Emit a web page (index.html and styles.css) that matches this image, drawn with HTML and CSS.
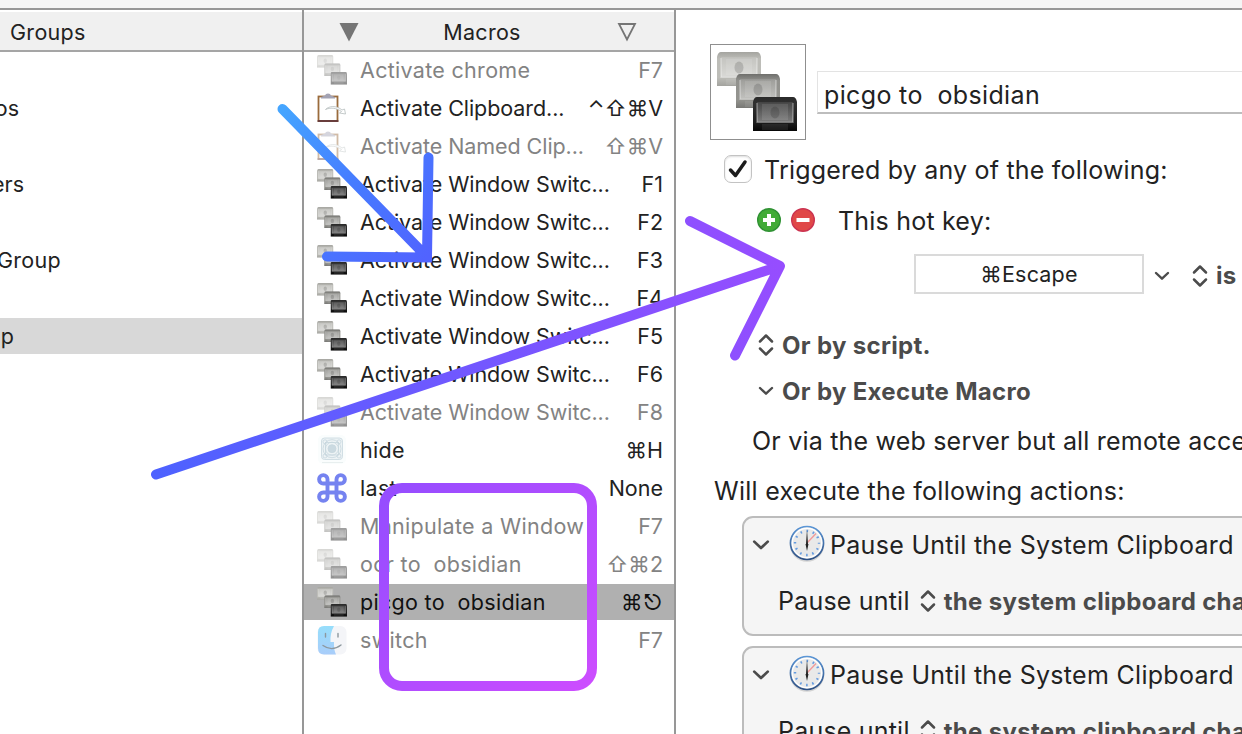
FILE: index.html
```html
<!DOCTYPE html>
<html lang="en">
<head>
<meta charset="utf-8">
<title>Macro Editor</title>
<link rel="stylesheet" href="styles.css">
</head>
<body>
<svg class="defs" width="0" height="0">
  <defs>
    <linearGradient id="k1" x2="0" y2="1"><stop offset="0" stop-color="#a4a49f"/><stop offset=".2" stop-color="#bdbdb8"/><stop offset=".75" stop-color="#bdbdb8"/><stop offset="1" stop-color="#a3a39e"/></linearGradient>
    <linearGradient id="k2" x2="0" y2="1"><stop offset="0" stop-color="#6f6f6c"/><stop offset=".2" stop-color="#92928e"/><stop offset=".75" stop-color="#94948f"/><stop offset="1" stop-color="#787875"/></linearGradient>
    <linearGradient id="k3" x2="0" y2="1"><stop offset="0" stop-color="#2a2a2a"/><stop offset=".2" stop-color="#303030"/><stop offset=".75" stop-color="#1c1c1c"/><stop offset="1" stop-color="#060606"/></linearGradient>
    <linearGradient id="screen" x2="0" y2="1"><stop offset="0" stop-color="#fff" stop-opacity=".1"/><stop offset="1" stop-color="#fff" stop-opacity=".42"/></linearGradient>
    <symbol id="keycap" viewBox="0 0 44 34">
      <path d="M0 34V5Q1 0 4 0H40Q43 0 44 5V34Z"/>
      <path d="M4 5H40V25H4Z" fill="url(#screen)"/>
      <path d="M4 6V25.300H40V6" fill="none" stroke="#fff" stroke-opacity=".4" stroke-width="1.300"/>
      <rect x="9" y="7" width="26" height="16" fill="#fff" fill-opacity=".1"/>
      <ellipse cx="22" cy="15.500" rx="4.500" ry="6" fill="#000" fill-opacity=".15"/>
      <rect x="9" y="27" width="26" height="6" fill="#fff" fill-opacity=".08"/>
    </symbol>
    <symbol id="keys" viewBox="0 0 80 80">
      <use href="#keycap" x="0" y="0" width="44" height="34" fill="url(#k1)"/>
      <use href="#keycap" x="19" y="22" width="44" height="34" fill="url(#k2)"/>
      <use href="#keycap" x="36" y="45" width="44" height="34" fill="url(#k3)"/>
    </symbol>
    <symbol id="clip" viewBox="0 0 30 30">
      <rect x="1.500" y="3.500" width="19" height="24.500" fill="#fff" stroke="#9a6b3c" stroke-width="1.800"/>
      <path d="M.6 28H21.400" stroke="#5b3038" stroke-width="1.600"/>
      <path d="M4 5.500V4L8 2.500Q8.500.5 11 .5T14 2.500L18 4V5.500Z" fill="#a3a3b4"/>
      <path d="M8.500 16.500C12 13 19 12 25 17L27.500 16L28.500 21L22.500 20L24.500 18.500C19 14.500 13 14.500 8.500 16.500Z" fill="#fff" stroke="#b5bcbc" stroke-width=".8"/>
    </symbol>
    <symbol id="grid" viewBox="0 0 30 30">
      <rect x="1" y="0" width="28" height="29" rx="5" fill="#fafdfd"/>
      <path d="M5 27.500H26" stroke="#e8efef"/>
      <g fill="none" stroke="#c8d7de" stroke-width=".8">
        <rect x="4.500" y="3" width="21" height="21.500" rx="3" fill="#edf3f5"/>
        <circle cx="15" cy="13.700" r="4" fill="#cbdae1"/><circle cx="15" cy="13.700" r="6.500"/><circle cx="15" cy="13.700" r="9"/>
        <rect x="8.500" y="7.500" width="13" height="12.500"/>
        <circle cx="8" cy="6.800" r="2"/><circle cx="22" cy="6.800" r="2"/><circle cx="8" cy="21" r="2"/><circle cx="22" cy="21" r="2"/>
      </g>
    </symbol>
    <symbol id="command" viewBox="0 0 30 30">
      <path d="M10.500 10.500V6.300A4.200 4.200 0 1 0 6.300 10.500H23.700A4.200 4.200 0 1 0 19.500 6.300V23.700A4.200 4.200 0 1 0 23.700 19.500H6.300A4.200 4.200 0 1 0 10.500 23.700Z" fill="none" stroke="#7583f0" stroke-width="3.900"/>
    </symbol>
    <linearGradient id="sky" x2="0" y2="1"><stop offset="0" stop-color="#96defb"/><stop offset="1" stop-color="#a9cdfa"/></linearGradient>
    <symbol id="finder" viewBox="0 0 30 30">
      <rect x=".5" y="1" width="29" height="28.500" rx="6" fill="#f4f5f8"/>
      <path d="M7 1H17Q13 8 13.500 17H17Q16.500 24 19 29.500H7Q1 29.500 1 23V7Q1 1 7 1Z" fill="url(#sky)"/>
      <path d="M8.500 8.500V12M21 8.500V12M6 20.500Q15 27 24 20" fill="none" stroke="#8d989e" stroke-width="1.400" stroke-linecap="round"/>
    </symbol>
    <symbol id="updown" viewBox="0 0 16 24"><path d="M2 8.500L8 2.500L14 8.500M2 15.500L8 21.500L14 15.500" fill="none" stroke="#4b4b4b" stroke-width="2.500" stroke-linecap="round" stroke-linejoin="round"/></symbol>
    <symbol id="down" viewBox="0 0 16 10"><path d="M2 2L8 7.700L14 2" fill="none" stroke="#4b4b4b" stroke-width="2.400" stroke-linecap="round" stroke-linejoin="round"/></symbol>
    <linearGradient id="rim" x2="0" y2="1"><stop offset="0" stop-color="#5b96d6"/><stop offset="1" stop-color="#2e5084"/></linearGradient>
    <symbol id="clock" viewBox="0 0 36 38">
      <circle cx="18" cy="19.500" r="17.300" fill="#bbb" opacity=".6"/>
      <circle cx="18" cy="18" r="16.500" fill="#e9e9e9" stroke="url(#rim)" stroke-width="1.700"/>
      <circle cx="18" cy="18" r="14.700" fill="none" stroke="#fff" stroke-width="1.300"/>
      <circle cx="18" cy="18" r="12" fill="none" stroke="#649be0" stroke-width="2.400" stroke-dasharray="1.600 4.683" stroke-dashoffset=".8"/>
      <path d="M18 18L27 8.500" stroke="#f09a9a" stroke-width="1.400"/>
      <path d="M17 19L18 4.500L19 19ZM16.500 19L18 26L19.500 19Z" fill="#222"/>
    </symbol>
  </defs>
</svg>

<div class="window">
  <div class="toolbar"></div>
  <div class="columns">
    <section class="groups">
      <header class="head"><span class="head-groups">Groups</span></header>
      <ul class="list">
        <li class="group"></li>
        <li class="group"><span class="tail tail-a">os</span></li>
        <li class="group"></li>
        <li class="group"><span class="tail tail-b">ers</span></li>
        <li class="group"></li>
        <li class="group"><span class="tail tail-c">Group</span></li>
        <li class="group"></li>
        <li class="group current"><span class="tail tail-d">p</span></li>
      </ul>
    </section>

    <section class="macros">
      <header class="head head-macros">
        <svg width="20" height="20" viewBox="0 0 20 20"><path d="M.5 1H19.500L10 19.500Z" fill="#757575"/></svg>
        <span class="head-title">Macros</span>
        <svg width="20" height="20" viewBox="0 0 20 20"><path d="M2 2H18L10 17.500Z" fill="none" stroke="#757575" stroke-width="1.800"/></svg>
      </header>
      <ul class="list">
        <li class="macro off"><svg class="ic"><use href="#keys"/></svg><span class="name">Activate chrome</span><span class="key">F7</span></li>
        <li class="macro"><svg class="ic"><use href="#clip"/></svg><span class="name tight">Activate Clipboard...</span><span class="key">⌃⇧⌘V</span></li>
        <li class="macro off"><svg class="ic"><use href="#clip"/></svg><span class="name tight">Activate Named Clip...</span><span class="key">⇧⌘V</span></li>
        <li class="macro"><svg class="ic"><use href="#keys"/></svg><span class="name tight">Activate Window Switc...</span><span class="key">F1</span></li>
        <li class="macro"><svg class="ic"><use href="#keys"/></svg><span class="name tight">Activate Window Switc...</span><span class="key">F2</span></li>
        <li class="macro"><svg class="ic"><use href="#keys"/></svg><span class="name tight">Activate Window Switc...</span><span class="key">F3</span></li>
        <li class="macro"><svg class="ic"><use href="#keys"/></svg><span class="name tight">Activate Window Switc...</span><span class="key">F4</span></li>
        <li class="macro"><svg class="ic"><use href="#keys"/></svg><span class="name tight">Activate Window Switc...</span><span class="key">F5</span></li>
        <li class="macro"><svg class="ic"><use href="#keys"/></svg><span class="name tight">Activate Window Switc...</span><span class="key">F6</span></li>
        <li class="macro off"><svg class="ic"><use href="#keys"/></svg><span class="name tight">Activate Window Switc...</span><span class="key">F8</span></li>
        <li class="macro"><svg class="ic"><use href="#grid"/></svg><span class="name">hide</span><span class="key">⌘H</span></li>
        <li class="macro"><svg class="ic"><use href="#command"/></svg><span class="name">last</span><span class="key">None</span></li>
        <li class="macro off"><svg class="ic"><use href="#keys"/></svg><span class="name">Manipulate a Window</span><span class="key">F7</span></li>
        <li class="macro off"><svg class="ic"><use href="#keys"/></svg><span class="name">ocr to  obsidian</span><span class="key">⇧⌘2</span></li>
        <li class="macro selected"><svg class="ic"><use href="#keys"/></svg><span class="name">picgo to  obsidian</span><span class="key">⌘⎋</span></li>
        <li class="macro off"><svg class="ic full"><use href="#finder"/></svg><span class="name">switch</span><span class="key">F7</span></li>
      </ul>
    </section>

    <main class="editor">
      <div class="title-row">
        <div class="well"><svg width="80" height="80"><use href="#keys"/></svg></div>
        <div class="name-field">picgo to  obsidian</div>
      </div>
      <div class="trigger-row">
        <span class="check"><svg width="20" height="20" viewBox="0 0 20 20"><path d="M2.500 11L7.500 16.500L17 3" fill="none" stroke="#1c1c1c" stroke-width="3.500" stroke-linecap="round" stroke-linejoin="round"/></svg></span>
        <span class="trigger-text">Triggered by any of the following:</span>
      </div>
      <div class="hotkey-row">
        <svg width="24" height="24" viewBox="0 0 24 24"><circle cx="12" cy="12" r="11.300" fill="#42ab37" stroke="#2f9133" stroke-width="1.400"/><path d="M12 6V18M6 12H18" stroke="#fff" stroke-width="4"/></svg>
        <svg width="24" height="24" viewBox="0 0 24 24"><circle cx="12" cy="12" r="11.300" fill="#e04848" stroke="#cb3350" stroke-width="1.400"/><path d="M5.500 12H18.500" stroke="#fff" stroke-width="4"/></svg>
        <span class="hotkey-text">This hot key:</span>
      </div>
      <div class="shortcut-row">
        <div class="shortcut">⌘Escape</div>
        <svg class="chev" width="16" height="10"><use href="#down"/></svg>
        <svg class="spin" width="16" height="24"><use href="#updown"/></svg>
        <span class="strong is">is</span>
      </div>
      <div class="option option-script"><svg width="16" height="24"><use href="#updown"/></svg><span class="strong">Or by script.</span></div>
      <div class="option option-macro"><svg width="16" height="10"><use href="#down"/></svg><span class="strong s-macro">Or by Execute Macro</span></div>
      <div class="web">Or via the web server but all remote access</div>
      <div class="will">Will execute the following actions:</div>
      <div class="actions">
        <article class="action">
          <div class="action-head"><svg width="18" height="12" viewBox="0 0 16 10"><use href="#down"/></svg><svg class="clock" width="36" height="38"><use href="#clock"/></svg><span class="action-title">Pause Until the System Clipboard</span></div>
          <div class="action-body"><span class="until">Pause until</span><svg width="16" height="24"><use href="#updown"/></svg><span class="strong s-clip">the system clipboard changes</span></div>
        </article>
        <article class="action">
          <div class="action-head"><svg width="18" height="12" viewBox="0 0 16 10"><use href="#down"/></svg><svg class="clock" width="36" height="38"><use href="#clock"/></svg><span class="action-title">Pause Until the System Clipboard</span></div>
          <div class="action-body"><span class="until">Pause until</span><svg width="16" height="24"><use href="#updown"/></svg><span class="strong s-clip">the system clipboard changes</span></div>
        </article>
      </div>
    </main>
  </div>

  <svg class="marks" width="1242" height="734" viewBox="0 0 1242 734">
    <defs>
      <linearGradient id="a" gradientUnits="userSpaceOnUse" x1="282" y1="109" x2="427" y2="257"><stop offset="0" stop-color="#45a5ff"/><stop offset=".5" stop-color="#467bff"/><stop offset="1" stop-color="#5163ff"/></linearGradient>
      <linearGradient id="b" gradientUnits="userSpaceOnUse" x1="155" y1="475" x2="780" y2="266"><stop offset="0" stop-color="#4d62ff"/><stop offset="1" stop-color="#964dff"/></linearGradient>
      <linearGradient id="c" gradientUnits="userSpaceOnUse" x1="382" y1="486" x2="594" y2="688"><stop offset="0" stop-color="#944dff"/><stop offset="1" stop-color="#cd4dff"/></linearGradient>
    </defs>
    <g fill="none" stroke-width="10" stroke-linecap="round" stroke-linejoin="miter">
      <path d="M282.500 109L427 257M327 256.500L427 257.500L428.500 157.500" stroke="url(#a)"/>
      <path d="M156 474.500L780 266M690 221L780 266L735 355.500" stroke="url(#b)" stroke-linejoin="round"/>
      <rect x="384" y="488" width="208" height="198" rx="18" stroke="url(#c)"/>
    </g>
  </svg>
</div>
</body>
</html>
```

FILE: styles.css
```css
* { box-sizing: border-box; }

body {
  margin: 0;
  font-family: Inter, "Liberation Sans", sans-serif;
  color: #222;
  background: #fff;
}

.defs { position: absolute; }

.window {
  position: relative;
  display: flex;
  flex-direction: column;
  width: 1242px;
  height: 734px;
  overflow: hidden;
}

.toolbar {
  flex: none;
  height: 10px;
  background: #f5f5f5;
  border-bottom: 2px solid #979797;
}

.columns {
  display: grid;
  grid-template-columns: 304px 372px 566px;
  flex: 1;
  min-height: 0;
}

.groups, .macros { border-right: 2px solid #979797; overflow: hidden; }

.head {
  display: flex;
  align-items: center;
  height: 42px;
  padding-top: 2px;
  border-top: 2px solid #fff;
  border-bottom: 2px solid #a5a5a5;
  background: #f0f0f0;
  font-size: 21.5px;
  letter-spacing: .3px;
}

.head-groups { padding-left: 10px; }
.head-macros { justify-content: space-between; padding-left: 35px; padding-right: 37px; }
.head-title { padding-right: 12px; }

.list {
  display: flex;
  flex-direction: column;
  gap: 2px;
  margin: 0;
  padding: 0;
  list-style: none;
  font-size: 21.5px;
}

.group, .macro { display: flex; align-items: center; height: 36px; }
.group { padding-bottom: 1px; }
.group.current { background: #d8d8d8; }
.tail { display: flex; justify-content: flex-end; }
.tail-a { width: 19px; }
.tail-b { width: 24px; }
.tail-c { width: 61px; letter-spacing: .3px; }
.tail-d { width: 14px; }

.macro { padding-left: 13px; padding-right: 11px; white-space: pre; }
.ic { width: 30px; height: 30px; flex: none; }
.name { flex: 1; padding-left: 13px; letter-spacing: .3px; }
.name.tight { letter-spacing: -.07px; }
.name, .key { padding-bottom: 1px; }
.off { color: #838383; }
.off .ic { opacity: .45; }
.off .ic.full { opacity: 1; }
.selected { background: #b0b0b0; color: #111; }

.editor { overflow: hidden; white-space: nowrap; font-size: 25px; letter-spacing: .2px; }
.editor svg { flex: none; }

.title-row { display: flex; padding: 34px 0 0 34px; }
.well {
  display: flex;
  flex: none;
  align-items: center;
  justify-content: center;
  width: 96px;
  height: 96px;
  padding-right: 2px;
  border: 1px solid #8f8f8f;
}
.name-field {
  display: flex;
  flex: none;
  align-items: center;
  width: 440px;
  height: 43px;
  margin: 27px 0 0 11px;
  padding: 6px 0 0 6px;
  border: 1px solid #e3e3e3;
  border-bottom: 2px solid #bdbdbd;
  white-space: pre;
  letter-spacing: .35px;
}

.trigger-row { display: flex; align-items: center; height: 30px; margin-top: 14px; padding-left: 48px; }
.check {
  display: flex;
  align-items: center;
  justify-content: center;
  width: 28px;
  height: 28px;
  border: 1px solid #c3c3c3;
  border-radius: 7px;
  box-shadow: inset 0 1px 2px #ddd;
}
.trigger-text { padding: 2px 0 0 12px; }

.hotkey-row { display: flex; align-items: center; gap: 10px; height: 30px; margin-top: 21px; padding-left: 81px; }
.hotkey-text { padding: 2px 0 0 13px; }

.shortcut-row { display: flex; align-items: center; height: 40px; margin-top: 19px; padding-left: 238px; }
.shortcut {
  display: flex;
  align-items: center;
  justify-content: center;
  width: 230px;
  height: 40px;
  border: 2px solid #dadada;
  font-size: 21.5px;
}
.chev { margin: 4px 0 0 10px; }
.spin { margin: 4px 8px 0 22px; }
.is { padding-top: 2px; }

.strong { color: #4b4b4b; font-size: 24px; font-weight: 700; letter-spacing: .32px; }

.option { display: flex; align-items: center; gap: 8px; height: 30px; padding-left: 82px; }
.option-script { margin-top: 36px; }
.option-macro { margin-top: 16px; }

.web { height: 30px; margin-top: 20px; padding-left: 76px; line-height: 30px; }
.will { height: 30px; margin-top: 20px; padding-left: 38px; line-height: 30px; letter-spacing: .27px; }

.actions { display: flex; flex-direction: column; gap: 10px; margin-top: 10px; padding-left: 66px; }
.action {
  width: 560px;
  height: 120px;
  border: 2px solid #bcbcbc;
  border-radius: 11px;
  background: #f5f5f5;
}
.action-head { display: flex; align-items: center; height: 54px; padding-left: 8px; }
.action-title { letter-spacing: .3px; }
.clock { margin: 0 5px 2px 19px; }
.action-body { display: flex; align-items: center; height: 58px; padding-left: 34px; }
.action-body svg { margin: 0 8px 0 10px; }

.marks { position: absolute; left: 0; top: 0; }
```
